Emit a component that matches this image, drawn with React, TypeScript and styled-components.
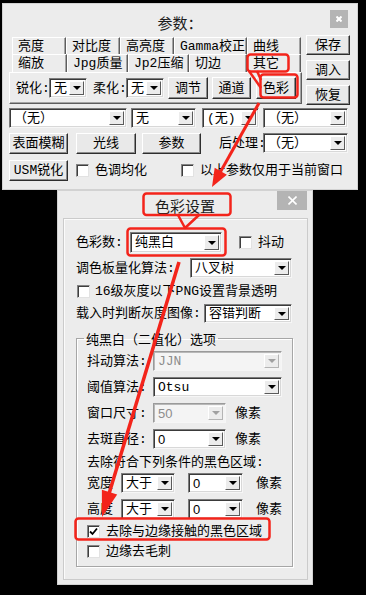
import React from "react";
import styled, { createGlobalStyle } from "styled-components";

const RED = "#f3241b";

const GlobalStyle = createGlobalStyle`
  html, body {
    margin: 0;
    padding: 0;
    background: #000;
  }
  body {
    width: 366px;
    height: 595px;
    overflow: hidden;
    font-family: "Liberation Mono", "Noto Sans CJK SC", monospace;
    font-size: 13px;
    line-height: 15px;
    color: #000;
  }
  * {
    box-sizing: border-box;
  }
`;

const Stage = styled.div`
  position: relative;
  width: 366px;
  height: 595px;
  padding-top: 3px;
  background: #000;
`;

const Win = styled.div<{ $left: number; $w: number; $h: number }>`
  margin-left: ${(p) => p.$left}px;
  width: ${(p) => p.$w}px;
  height: ${(p) => p.$h}px;
  background: #ececec;
  border: 1px solid #d2d2d2;
  display: flex;
  flex-direction: column;
`;

const TitleBar = styled.div<{ $h: number }>`
  flex: none;
  height: ${(p) => p.$h}px;
  display: grid;
  grid-template-columns: 1fr auto 1fr;
  align-items: start;
`;

const Title = styled.div<{ $mt: number }>`
  grid-column: 2;
  margin-top: ${(p) => p.$mt}px;
  font-family: "Noto Sans CJK SC", sans-serif;
  font-size: 15px;
  line-height: 15px;
  color: #1c1c1c;
`;

const CloseBtn = styled.div<{ $w: number; $h: number; $mt: number; $mr: number }>`
  grid-column: 3;
  justify-self: end;
  width: ${(p) => p.$w}px;
  height: ${(p) => p.$h}px;
  margin-top: ${(p) => p.$mt}px;
  margin-right: ${(p) => p.$mr}px;
  background: #b4b4b4;
  display: flex;
  align-items: center;
  justify-content: center;
`;

const Body = styled.div<{ $pt: number; $pl: number }>`
  display: flex;
  flex-direction: column;
  padding: ${(p) => p.$pt}px 0 0 ${(p) => p.$pl}px;
`;

const TopSection = styled.div`
  display: flex;
  gap: 4px;
`;

const TabControl = styled.div`
  width: 293px;
  margin-top: 2px;
  display: flex;
  flex-direction: column;
`;

const TabRow = styled.div<{ $h: number }>`
  display: flex;
  height: ${(p) => p.$h}px;
  padding-left: 3px;
`;

const Tab = styled.div<{ $w: number }>`
  width: ${(p) => p.$w}px;
  height: 100%;
  border-top: 1px solid #fff;
  border-left: 1px solid #fff;
  border-right: 1px solid #5e5e5e;
  box-shadow: inset -1px 0 0 #a4a4a4;
  padding-left: 5px;
  display: flex;
  align-items: center;
  white-space: nowrap;
`;

const TabPanel = styled.div`
  height: 32px;
  border: 1px solid;
  border-color: #fff #5e5e5e #5e5e5e #fff;
  box-shadow: inset -1px -1px 0 #a4a4a4;
  display: flex;
  align-items: center;
  padding-left: 6px;
`;

const SideButtons = styled.div`
  display: flex;
  flex-direction: column;
  gap: 5px;
`;

const Row = styled.div<{ $mt: number; $h: number }>`
  display: flex;
  align-items: center;
  flex: none;
  margin-top: ${(p) => p.$mt}px;
  height: ${(p) => p.$h}px;
`;

const Label = styled.span<{ $w?: number; $ml?: number }>`
  flex: none;
  width: ${(p) => (p.$w ? `${p.$w}px` : "auto")};
  margin-left: ${(p) => p.$ml ?? 0}px;
  white-space: nowrap;
`;

const Btn = styled.div<{ $w: number; $h: number; $ml?: number }>`
  flex: none;
  width: ${(p) => p.$w}px;
  height: ${(p) => p.$h}px;
  margin-left: ${(p) => p.$ml ?? 0}px;
  background: #e9e9e9;
  border: 1px solid;
  border-color: #fff #2e2e2e #2e2e2e #fff;
  box-shadow: inset -1px -1px 0 #8c8c8c;
  display: flex;
  align-items: center;
  justify-content: center;
  white-space: nowrap;
`;

const ComboBox = styled.div<{ $w: number; $h: number; $ml?: number; $off?: boolean }>`
  flex: none;
  width: ${(p) => p.$w}px;
  height: ${(p) => p.$h}px;
  margin-left: ${(p) => p.$ml ?? 0}px;
  background: ${(p) => (p.$off ? "#f4f4f4" : "#fff")};
  border: 1px solid;
  border-color: ${(p) => (p.$off ? "#9a9a9a #f6f6f6 #f6f6f6 #9a9a9a" : "#7c7c7c #f6f6f6 #f6f6f6 #7c7c7c")};
  box-shadow: ${(p) =>
    p.$off ? "inset 1px 1px 0 #b8b8b8" : "inset 1px 1px 0 #3a3a3a, inset -1px -1px 0 #d8d8d8"};
  padding: 2px 2px 2px 2px;
  display: flex;
  align-items: stretch;
`;

const ComboText = styled.span<{ $off?: boolean; $sans?: boolean }>`
  flex: 1;
  padding-left: 2px;
  display: flex;
  align-items: center;
  white-space: nowrap;
  overflow: hidden;
  color: ${(p) => (p.$off ? "#8d8d8d" : "#000")};
  font-family: ${(p) =>
    p.$sans ? `"Liberation Sans", "Noto Sans CJK SC", sans-serif` : `"Liberation Mono", "Noto Sans CJK SC", monospace`};
`;

const DropButton = styled.span<{ $off?: boolean }>`
  flex: none;
  width: 15px;
  background: #ececec;
  border: 1px solid;
  border-color: ${(p) => (p.$off ? "#fff #b4b4b4 #b4b4b4 #fff" : "#fff #5a5a5a #5a5a5a #fff")};
  display: flex;
  align-items: center;
  justify-content: center;
  &::after {
    content: "";
    border-left: 4px solid transparent;
    border-right: 4px solid transparent;
    border-top: 4px solid ${(p) => (p.$off ? "#a0a0a0" : "#000")};
  }
`;

const CheckBox = styled.span<{ $ml?: number }>`
  flex: none;
  width: 13px;
  height: 13px;
  margin-left: ${(p) => p.$ml ?? 0}px;
  background: #fff;
  border: 1px solid;
  border-color: #848484 #e2e2e2 #e2e2e2 #848484;
  box-shadow: inset 1px 1px 0 #3e3e3e;
  display: flex;
  align-items: center;
  justify-content: center;
`;

const InnerFrame = styled.div`
  flex: none;
  height: 362px;
  margin: 0 4px 0 5px;
  border: 1px solid #cbcbcb;
  box-shadow: inset 1px 1px 0 #fbfbfb;
  padding: 13px 0 0 12px;
  display: flex;
  flex-direction: column;
`;

const GroupBox = styled.fieldset`
  flex: none;
  width: 217px;
  height: 236px;
  margin: 8px 0 0 0;
  padding: 5px 0 0 10px;
  border: 1px solid #a6a6a6;
  box-shadow: inset 1px 1px 0 #fff, 1px 1px 0 #fff;
  display: flex;
  flex-direction: column;
`;

const Legend = styled.legend`
  margin-left: -3px;
  padding: 0 2px;
  font-size: 13px;
  line-height: 15px;
  font-family: "Noto Sans CJK SC", sans-serif;
`;

const Overlay = styled.svg`
  position: absolute;
  left: 0;
  top: 0;
  pointer-events: none;
`;

type ComboProps = { w: number; h?: number; ml?: number; text: string; off?: boolean; sans?: boolean };

const Combo = ({ w, h = 20, ml, text, off, sans }: ComboProps) => (
  <ComboBox $w={w} $h={h} $ml={ml} $off={off}>
    <ComboText $off={off} $sans={sans}>{text}</ComboText>
    <DropButton $off={off} />
  </ComboBox>
);

const Check = ({ ml, checked }: { ml?: number; checked?: boolean }) => (
  <CheckBox $ml={ml}>
    {checked && (
      <svg width="9" height="9" viewBox="0 0 9 9">
        <polyline points="1,4.5 3.5,7 8,1.5" fill="none" stroke="#000" strokeWidth="1.8" />
      </svg>
    )}
  </CheckBox>
);

const CloseIcon = ({ s, sw }: { s: number; sw: number }) => (
  <svg width={s} height={s} viewBox={`0 0 ${s} ${s}`}>
    <line x1="0.5" y1="0.5" x2={s - 0.5} y2={s - 0.5} stroke="#fff" strokeWidth={sw} />
    <line x1={s - 0.5} y1="0.5" x2="0.5" y2={s - 0.5} stroke="#fff" strokeWidth={sw} />
  </svg>
);

function arrow(x1: number, y1: number, x2: number, y2: number, len: number, half: number) {
  const dx = x2 - x1;
  const dy = y2 - y1;
  const d = Math.hypot(dx, dy);
  const ux = dx / d;
  const uy = dy / d;
  const bx = x2 - ux * len;
  const by = y2 - uy * len;
  const nx = -uy;
  const ny = ux;
  return {
    end: [bx + ux * 2, by + uy * 2],
    head: `${x2},${y2} ${bx + nx * half},${by + ny * half} ${bx - nx * half},${by - ny * half}`,
  };
}

const Marks = () => {
  const a1 = arrow(259, 103, 212, 187, 18, 7);
  const a2 = arrow(179, 262, 102, 517, 26, 8);
  return (
    <Overlay width="366" height="595" viewBox="0 0 366 595">
      <g fill="none" stroke={RED} strokeWidth="2.5" strokeLinejoin="round">
        <rect x="247.5" y="54.5" width="41" height="17" rx="3" />
        <rect x="260.5" y="74.5" width="37" height="23" rx="3" />
        <polyline points="249,71 261,88" />
        <polyline points="257,71 261,80" />
        <rect x="143.5" y="193.5" width="87" height="21.5" rx="3" />
        <rect x="127.5" y="228.5" width="98" height="27" rx="3" />
        <polyline points="178,215 185,228 199,215" />
        <rect x="75.5" y="518.5" width="194" height="21" rx="3" />
      </g>
      <line x1="259" y1="103" x2={a1.end[0]} y2={a1.end[1]} stroke={RED} strokeWidth="3" />
      <polygon points={a1.head} fill={RED} />
      <line x1="179" y1="262" x2={a2.end[0]} y2={a2.end[1]} stroke={RED} strokeWidth="3.5" />
      <polygon points={a2.head} fill={RED} />
    </Overlay>
  );
};

const tabsTop = [
  { t: "亮度", w: 54 },
  { t: "对比度", w: 54 },
  { t: "高亮度", w: 54 },
  { t: "Gamma校正", w: 73 },
  { t: "曲线", w: 54 },
];

const tabsBottom = [
  { t: "缩放", w: 55 },
  { t: "Jpg质量", w: 61 },
  { t: "Jp2压缩", w: 61 },
  { t: "切边", w: 58 },
  { t: "其它", w: 54 },
];

const ParamsDialog = () => (
  <Win $left={2} $w={356} $h={187}>
    <TitleBar $h={30}>
      <Title $mt={11}>参数：</Title>
      <CloseBtn $w={18} $h={18} $mt={6} $mr={9}>
        <CloseIcon s={6} sw={2} />
      </CloseBtn>
    </TitleBar>
    <Body $pt={1} $pl={6}>
      <TopSection>
        <TabControl>
          <TabRow $h={17}>
            {tabsTop.map((t) => (
              <Tab key={t.t} $w={t.w}>{t.t}</Tab>
            ))}
          </TabRow>
          <TabRow $h={18}>
            {tabsBottom.map((t) => (
              <Tab key={t.t} $w={t.w}>{t.t}</Tab>
            ))}
          </TabRow>
          <TabPanel>
            <Label $w={33}>锐化:</Label>
            <Combo w={38} text="无" />
            <Label $w={33} $ml={6}>柔化:</Label>
            <Combo w={38} text="无" />
            <Btn $w={40} $h={22} $ml={4}>调节</Btn>
            <Btn $w={39} $h={22} $ml={4}>通道</Btn>
            <Btn $w={40} $h={22} $ml={5}>色彩</Btn>
          </TabPanel>
        </TabControl>
        <SideButtons>
          <Btn $w={44} $h={20}>保存</Btn>
          <Btn $w={44} $h={20}>调入</Btn>
          <Btn $w={44} $h={20}>恢复</Btn>
        </SideButtons>
      </TopSection>
      <Row $mt={3} $h={20}>
        <Combo w={118} text="（无）" />
        <Combo w={65} ml={4} text="无" />
        <Combo w={57} ml={6} text="(无)" />
        <Combo w={85} ml={4} text="（无）" />
      </Row>
      <Row $mt={5} $h={20}>
        <Btn $w={59} $h={21}>表面模糊</Btn>
        <Btn $w={60} $h={21} $ml={8}>光线</Btn>
        <Btn $w={59} $h={21} $ml={6}>参数</Btn>
        <Label $w={44} $ml={18}>后处理:</Label>
        <Combo w={85} text="（无）" />
      </Row>
      <Row $mt={7} $h={21}>
        <Btn $w={59} $h={21}>USM锐化</Btn>
        <Check ml={8} />
        <Label $ml={6}>色调均化</Label>
        <Check ml={34} />
        <Label $ml={6}>以上参数仅用于当前窗口</Label>
      </Row>
    </Body>
  </Win>
);

const ColorDialog = () => (
  <Win $left={57} $w={256} $h={395}>
    <TitleBar $h={27}>
      <Title $mt={7}>色彩设置</Title>
      <CloseBtn $w={30} $h={19} $mt={0} $mr={5}>
        <CloseIcon s={9} sw={1.6} />
      </CloseBtn>
    </TitleBar>
    <InnerFrame>
      <Row $mt={0} $h={21}>
        <Label $w={54}>色彩数:</Label>
        <Combo w={92} h={21} text="纯黑白" />
        <Check ml={17} />
        <Label $ml={6}>抖动</Label>
      </Row>
      <Row $mt={5} $h={20}>
        <Label $w={114}>调色板量化算法:</Label>
        <Combo w={102} text="八叉树" />
      </Row>
      <Row $mt={6} $h={15}>
        <Check ml={1} />
        <Label $ml={5}>16级灰度以下PNG设置背景透明</Label>
      </Row>
      <Row $mt={5} $h={19}>
        <Label $w={128}>载入时判断灰度图像:</Label>
        <Combo w={88} h={19} text="容错判断" />
      </Row>
      <GroupBox>
        <Legend>纯黑白（二值化）选项</Legend>
        <Row $mt={0} $h={20}>
          <Label $w={66}>抖动算法:</Label>
          <Combo w={129} text="JJN" off />
        </Row>
        <Row $mt={6} $h={20}>
          <Label $w={66}>阈值算法:</Label>
          <Combo w={129} text="Otsu" />
        </Row>
        <Row $mt={6} $h={20}>
          <Label $w={66}>窗口尺寸:</Label>
          <Combo w={73} text="50" off sans />
          <Label $ml={9}>像素</Label>
        </Row>
        <Row $mt={6} $h={20}>
          <Label $w={66}>去斑直径:</Label>
          <Combo w={73} text="0" sans />
          <Label $ml={9}>像素</Label>
        </Row>
        <Row $mt={6} $h={14}>
          <Label>去除符合下列条件的黑色区域:</Label>
        </Row>
        <Row $mt={4} $h={20}>
          <Label $w={34}>宽度</Label>
          <Combo w={54} text="大于" />
          <Combo w={55} ml={13} text="0" sans />
          <Label $ml={13}>像素</Label>
        </Row>
        <Row $mt={6} $h={20}>
          <Label $w={34}>高度</Label>
          <Combo w={54} text="大于" />
          <Combo w={55} ml={13} text="0" sans />
          <Label $ml={13}>像素</Label>
        </Row>
        <Row $mt={5} $h={14}>
          <Check checked />
          <Label $ml={6}>去除与边缘接触的黑色区域</Label>
        </Row>
        <Row $mt={6} $h={14}>
          <Check />
          <Label $ml={6}>边缘去毛刺</Label>
        </Row>
      </GroupBox>
    </InnerFrame>
  </Win>
);

export default function App() {
  return (
    <>
      <GlobalStyle />
      <Stage>
        <ParamsDialog />
        <ColorDialog />
        <Marks />
      </Stage>
    </>
  );
}
